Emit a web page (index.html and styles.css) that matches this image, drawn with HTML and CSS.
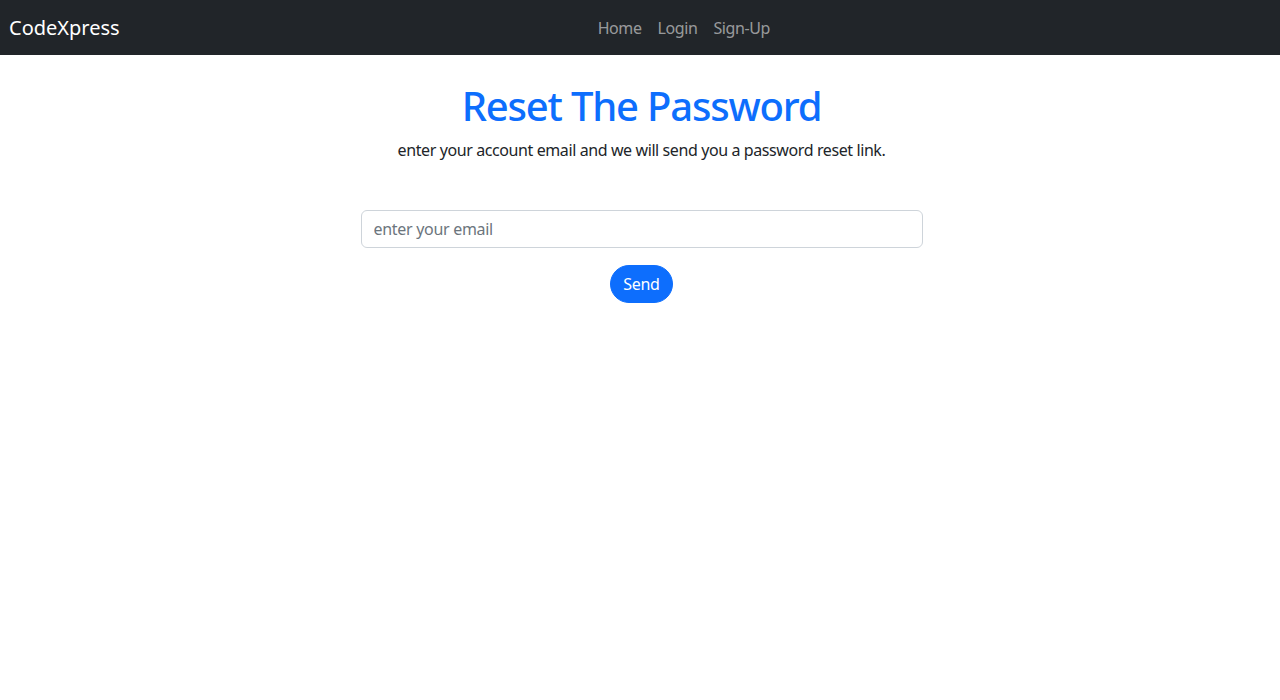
FILE: index.html
```html
<!DOCTYPE html>
<html lang="en">
<head>
<meta charset="UTF-8">
<meta name="viewport" content="width=device-width, initial-scale=1.0">
<title>Reset Password - CodeXpress</title>
<link rel="stylesheet" href="styles.css">
</head>
<body>

<nav class="navbar">
    <a class="navbar-brand" href="#">CodeXpress</a>
    <ul class="navbar-nav">
        <li><a class="nav-link" href="#">Home</a></li>
        <li><a class="nav-link" href="#">Login</a></li>
        <li><a class="nav-link" href="#">Sign-Up</a></li>
    </ul>
</nav>

<div class="reset">
    <h1 class="reset-title">Reset The Password</h1>
    <p class="reset-text">enter your account email and we will send you a password reset link.</p>
    <form class="reset-form">
        <input class="form-control" type="email" placeholder="enter your email">
        <button class="btn-send" type="submit">Send</button>
    </form>
</div>

</body>
</html>
```

FILE: styles.css
```css
body {
    font-family: "Noto Sans", "Open Sans", sans-serif;
    font-size: 16px;
    letter-spacing: -0.4px;
    margin: 0;
    padding: 0;
    color: #212529;
    background-color: #fff;
}
.navbar {
    display: flex;
    align-items: center;
    height: 55px;
    padding: 0 12px 0 9px;
    background-color: #212529;
    box-sizing: border-box;
}
.navbar-brand {
    color: #fff;
    font-size: 20px;
    letter-spacing: 0;
    text-decoration: none;
    margin-right: 16px;
}
.navbar-nav {
    display: flex;
    flex: 1;
    justify-content: center;
    list-style: none;
    margin: 0;
    padding: 0 36px 0 0;
}
.nav-link {
    display: block;
    padding: 8px;
    color: rgba(255, 255, 255, 0.55);
    text-decoration: none;
}
.reset {
    display: flex;
    flex-direction: column;
    align-items: center;
    padding: 27px 0 0 3px;
}
.reset-title {
    margin: 0 0 8px;
    font-size: 40px;
    font-weight: 500;
    letter-spacing: -1.2px;
    line-height: 1.2;
    color: #0d6efd;
}
.reset-text {
    margin: 0 0 48px;
    line-height: 1.5;
}
.reset-form {
    display: flex;
    flex-direction: column;
    align-items: center;
    gap: 17px;
    width: 562px;
}
.form-control {
    width: 100%;
    height: 38px;
    box-sizing: border-box;
    padding: 6px 12px;
    font: inherit;
    letter-spacing: -0.3px;
    border: 1px solid #ced4da;
    border-radius: 6px;
    color: #212529;
}
.form-control::placeholder {
    color: #6c757d;
}
.btn-send {
    height: 38px;
    padding: 6px 12px;
    font: inherit;
    letter-spacing: -0.3px;
    color: #fff;
    background-color: #0d6efd;
    border: 1px solid #0d6efd;
    border-radius: 50rem;
    cursor: pointer;
}
```
